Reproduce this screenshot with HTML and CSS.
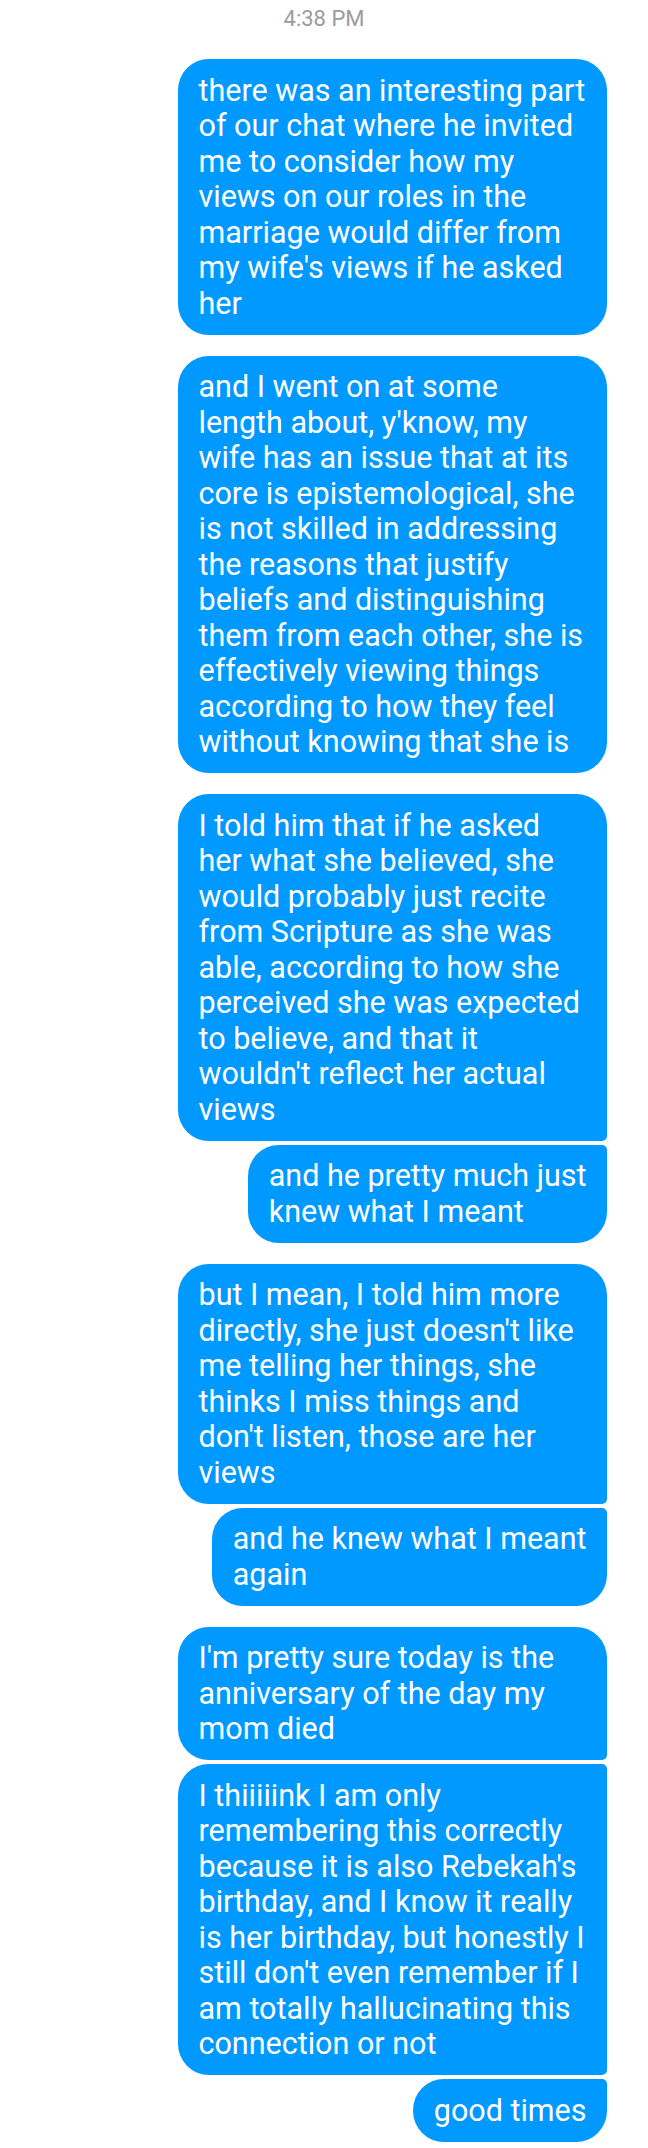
FILE: index.html
```html
<!DOCTYPE html>
<html>
<head>
<meta charset="utf-8">
<link rel="stylesheet" href="styles.css">
</head>
<body>
<div class="chat">
  <div class="time">4:38 PM</div>
  <div class="group">
    <div class="bubble full">there was an interesting part<br>of our chat where he invited<br>me to consider how my<br>views on our roles in the<br>marriage would differ from<br>my wife's views if he asked<br>her</div>
  </div>
  <div class="group">
    <div class="bubble full">and I went on at some<br>length about, y'know, my<br>wife has an issue that at its<br>core is epistemological, she<br>is not skilled in addressing<br>the reasons that justify<br>beliefs and distinguishing<br>them from each other, she is<br>effectively viewing things<br>according to how they feel<br>without knowing that she is</div>
  </div>
  <div class="group">
    <div class="bubble full">I told him that if he asked<br>her what she believed, she<br>would probably just recite<br>from Scripture as she was<br>able, according to how she<br>perceived she was expected<br>to believe, and that it<br>wouldn't reflect her actual<br>views</div>
    <div class="bubble">and he pretty much just<br>knew what I meant</div>
  </div>
  <div class="group">
    <div class="bubble full">but I mean, I told him more<br>directly, she just doesn't like<br>me telling her things, she<br>thinks I miss things and<br>don't listen, those are her<br>views</div>
    <div class="bubble">and he knew what I meant<br>again</div>
  </div>
  <div class="group">
    <div class="bubble full">I'm pretty sure today is the<br>anniversary of the day my<br>mom died</div>
    <div class="bubble full">I thiiiiink I am only<br>remembering this correctly<br>because it is also Rebekah's<br>birthday, and I know it really<br>is her birthday, but honestly I<br>still don't even remember if I<br>am totally hallucinating this<br>connection or not</div>
    <div class="bubble">good times</div>
  </div>
</div>
</body>
</html>
```
FILE: styles.css
```css
html, body {
  margin: 0;
  padding: 0;
  background: #ffffff;
}
body {
  font-family: Roboto, "Noto Sans", sans-serif;
}
.chat {
  width: 648px;
  display: flex;
  flex-direction: column;
  padding-top: 6px;
}
.time {
  text-align: center;
  color: #9c9c9c;
  font-size: 22px;
  line-height: 26px;
  height: 26px;
  margin-bottom: 27px;
}
.group {
  display: flex;
  flex-direction: column;
  align-items: flex-end;
  gap: 4px;
  padding-right: 41px;
  margin-bottom: 21px;
}
.bubble {
  background: #0099ff;
  color: #ffffff;
  font-size: 30.5px;
  line-height: 35.5px;
  padding: 13.5px 20.5px;
  border-radius: 31px;
  white-space: nowrap;
}
.bubble.full {
  width: 388px;
}
.group .bubble:not(:last-child) {
  border-bottom-right-radius: 5px;
}
.group .bubble:not(:first-child) {
  border-top-right-radius: 5px;
}
```
